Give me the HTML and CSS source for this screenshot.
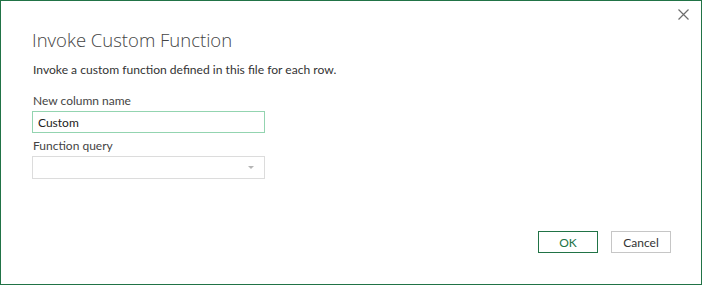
FILE: index.html
```html
<!DOCTYPE html>
<html lang="en">
<head>
    <meta charset="UTF-8">
    <meta name="viewport" content="width=device-width, initial-scale=1.0">
    <title>Invoke Custom Function</title>
    <link rel="stylesheet" href="styles.css">
</head>
<body>
    <div class="dialog">
        <button class="close" type="button" aria-label="Close">
            <svg width="11" height="11" viewBox="0 0 11 11"><path d="M0.5 0.5L10.5 10.5M10.5 0.5L0.5 10.5" stroke="#6d6d6d" stroke-width="1.2"/></svg>
        </button>

        <h1 class="title">Invoke Custom Function</h1>
        <p class="desc">Invoke a custom function defined in this file for each row.</p>

        <label class="label" for="colname">New column name</label>
        <input class="field" id="colname" type="text" value="Custom">

        <label class="label">Function query</label>
        <div class="select">
            <span class="arrow"></span>
        </div>

        <div class="buttons">
            <button class="btn ok" type="button">OK</button>
            <button class="btn" type="button">Cancel</button>
        </div>
    </div>
</body>
</html>
```

FILE: styles.css
```css
* {margin:0; padding:0; box-sizing:border-box;}
body {background:#fff; font-family:"Lato", "Open Sans", sans-serif; color:#333;}

.dialog {
    position:relative;
    width:702px; height:285px;
    border:1px solid #217346;
    padding:26px 31px 0 31px;
    display:flex; flex-direction:column; align-items:flex-start;
}

/* close button floats over the corner */
.close {
    position:absolute; top:8px; right:12px;
    width:11px; height:11px;
    border:0; background:none;
    display:flex;
}

.title {
    font-family:"Open Sans", sans-serif;
    font-weight:300; font-size:18.5px; line-height:26px;
    color:#444;
}
.desc {
    font-size:12.1px; line-height:18px;
    color:#333;
    margin:8px 0 0 1px;
}

.label {
    font-size:12px; line-height:16px;
    color:#444;
    margin:14px 0 2px 1px;
}

.field {
    width:233px; height:22px;
    border:1px solid #93d4b0;
    font-family:inherit; font-size:12px; color:#222;
    padding:0 5px;
    outline:none;
}
.field + .label {margin-top:5px;}

.select {
    position:relative;
    width:233px; height:23px;
    border:1px solid #dcdcdc;
}
.arrow {
    position:absolute; right:10px; top:9px;
    width:0; height:0;
    border-left:3px solid transparent;
    border-right:3px solid transparent;
    border-top:3px solid #b5b5b5;
}

.buttons {
    align-self:flex-end;
    display:flex; gap:13px;
    margin-top:52px; margin-right:-1px;
}
.btn {
    width:60px; height:22px;
    border:1px solid #c6c6c6; background:#fff;
    font-family:inherit; font-size:12px; color:#333;
}
.btn.ok {border-color:#217346; color:#217346;}
```
